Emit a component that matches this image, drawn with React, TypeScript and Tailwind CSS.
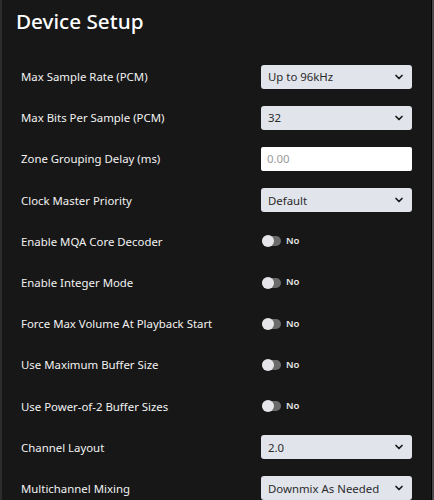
import { ChevronDown } from "lucide-react";

type Row =
    | { label: string; kind: "select"; value: string }
    | { label: string; kind: "input"; placeholder: string }
    | { label: string; kind: "toggle" };

const rows: Row[] = [
    { label: "Max Sample Rate (PCM)", kind: "select", value: "Up to 96kHz" },
    { label: "Max Bits Per Sample (PCM)", kind: "select", value: "32" },
    { label: "Zone Grouping Delay (ms)", kind: "input", placeholder: "0.00" },
    { label: "Clock Master Priority", kind: "select", value: "Default" },
    { label: "Enable MQA Core Decoder", kind: "toggle" },
    { label: "Enable Integer Mode", kind: "toggle" },
    { label: "Force Max Volume At Playback Start", kind: "toggle" },
    { label: "Use Maximum Buffer Size", kind: "toggle" },
    { label: "Use Power-of-2 Buffer Sizes", kind: "toggle" },
    { label: "Channel Layout", kind: "select", value: "2.0" },
    { label: "Multichannel Mixing", kind: "select", value: "Downmix As Needed" },
];

function Control({ row }: { row: Row }) {
    if (row.kind === "select") {
        return (
            <div className="flex h-6 w-[151px] items-center justify-between rounded-[3px] bg-[#e1e4eb] pl-[7px] pr-[7px] text-[11.4px] text-[#2b2b2b]">
                <span className="whitespace-nowrap">{row.value}</span>
                <ChevronDown size={12} strokeWidth={3.5} className="text-[#1a1a1a]" />
            </div>
        );
    }
    if (row.kind === "input") {
        return (
            <div className="flex h-6 w-[151px] items-center rounded-[2px] bg-white px-[6px] text-[11.4px] text-[#9a9a9a]">
                {row.placeholder}
            </div>
        );
    }
    return (
        <div className="flex items-center gap-[5px] pl-px">
            <div className="relative h-[10px] w-[19px] rounded-full bg-[#6b6b6b]">
                <div className="absolute -top-[1px] left-0 h-3 w-3 rounded-full bg-[#e6e6ea]" />
            </div>
            <span className="text-[9.5px] font-semibold text-[#e8e8e8]">No</span>
        </div>
    );
}

export default function App() {
    return (
        <div
            className="flex h-[500px] w-[434px] overflow-hidden bg-[#171717]"
            style={{ fontFamily: '"Noto Sans", "Open Sans", sans-serif' }}
        >
            <div className="w-[2px] bg-[#2c2c2c]" />
            <div className="flex-1">
                <h1 className="pl-[14px] pt-[6px] text-[20.7px] font-medium leading-[30px] text-white">
                    Device Setup
                </h1>
                <div className="flex flex-col pt-[20px]">
                    {rows.map((row) => (
                        <div key={row.label} className="flex h-[41.2px] items-center pl-[19px]">
                            <span className="w-[240px] whitespace-nowrap text-[11.4px] text-[#f2f2f2]">{row.label}</span>
                            <Control row={row} />
                        </div>
                    ))}
                </div>
            </div>
            <div className="w-px bg-black" />
            <div className="w-[2px] bg-[#4a4a4a]" />
        </div>
    );
}
